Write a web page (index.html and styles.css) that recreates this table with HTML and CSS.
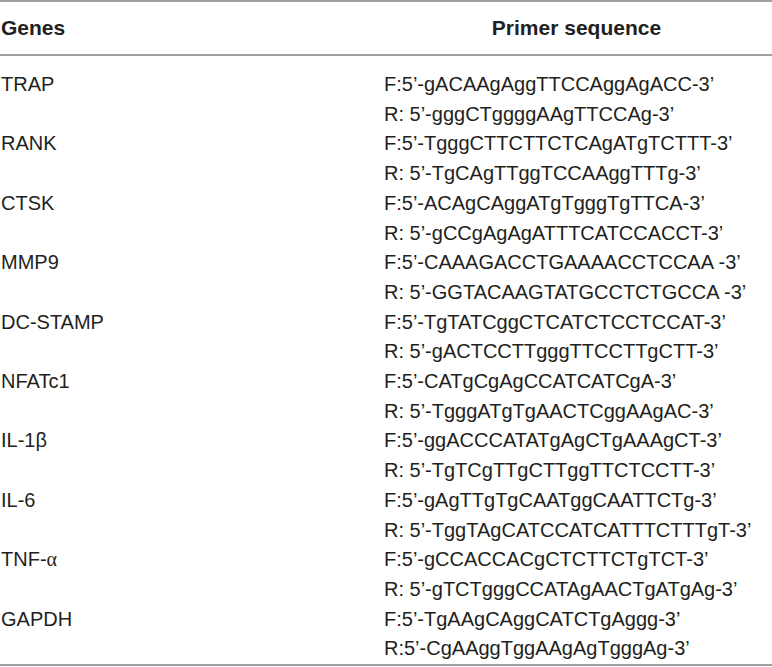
FILE: index.html
```html
<!DOCTYPE html>
<html>
<head>
<meta charset="utf-8">
<link rel="stylesheet" href="styles.css">
</head>
<body>
<table class="primers">
  <thead>
    <tr>
      <th class="col-gene">Genes</th>
      <th class="col-seq">Primer sequence</th>
    </tr>
  </thead>
  <tbody>
    <tr><td class="gene">TRAP</td><td class="seq"><div>F:5’-gACAAgAggTTCCAggAgACC-3’</div><div>R: 5’-gggCTggggAAgTTCCAg-3’</div></td></tr>
    <tr><td class="gene">RANK</td><td class="seq"><div>F:5’-TgggCTTCTTCTCAgATgTCTTT-3’</div><div>R: 5’-TgCAgTTggTCCAAggTTTg-3’</div></td></tr>
    <tr><td class="gene">CTSK</td><td class="seq"><div>F:5’-ACAgCAggATgTgggTgTTCA-3’</div><div>R: 5’-gCCgAgAgATTTCATCCACCT-3’</div></td></tr>
    <tr><td class="gene">MMP9</td><td class="seq"><div>F:5’-CAAAGACCTGAAAACCTCCAA -3’</div><div>R: 5’-GGTACAAGTATGCCTCTGCCA -3’</div></td></tr>
    <tr><td class="gene">DC-STAMP</td><td class="seq"><div>F:5’-TgTATCggCTCATCTCCTCCAT-3’</div><div>R: 5’-gACTCCTTgggTTCCTTgCTT-3’</div></td></tr>
    <tr><td class="gene">NFATc1</td><td class="seq"><div>F:5’-CATgCgAgCCATCATCgA-3’</div><div>R: 5’-TgggATgTgAACTCggAAgAC-3’</div></td></tr>
    <tr><td class="gene">IL-1<span class="greek">β</span></td><td class="seq"><div>F:5’-ggACCCATATgAgCTgAAAgCT-3’</div><div>R: 5’-TgTCgTTgCTTggTTCTCCTT-3’</div></td></tr>
    <tr><td class="gene">IL-6</td><td class="seq"><div>F:5’-gAgTTgTgCAATggCAATTCTg-3’</div><div>R: 5’-TggTAgCATCCATCATTTCTTTgT-3’</div></td></tr>
    <tr><td class="gene">TNF-<span class="greek alpha">α</span></td><td class="seq"><div>F:5’-gCCACCACgCTCTTCTgTCT-3’</div><div>R: 5’-gTCTgggCCATAgAACTgATgAg-3’</div></td></tr>
    <tr><td class="gene">GAPDH</td><td class="seq"><div>F:5’-TgAAgCAggCATCTgAggg-3’</div><div>R:5’-CgAAggTggAAgAgTgggAg-3’</div></td></tr>
  </tbody>
</table>
</body>
</html>
```

FILE: styles.css
```css
html, body {
  margin: 0;
  padding: 0;
  background: #ffffff;
}

body {
  font-family: "Liberation Sans", Arial, sans-serif;
  color: #231f20;
  font-size: 20px;
}

.primers {
  width: 772px;
  border-collapse: collapse;
  border-top: 2px solid #a0a0a0;
  border-bottom: 2px solid #a0a0a0;
}

.primers thead th {
  height: 52px;
  padding: 0;
  font-size: 21px;
  font-weight: bold;
  border-bottom: 2px solid #a0a0a0;
  vertical-align: middle;
}

.col-gene {
  width: 380px;
  text-align: left;
  padding-left: 1px !important;
}

.col-seq {
  text-align: center;
}

.primers tbody tr:first-child td {
  padding-top: 14px;
}

.gene {
  padding: 0 0 0 1px;
  vertical-align: top;
  line-height: 29.7px;
}

.seq {
  padding: 0 0 0 3px;
  vertical-align: top;
  line-height: 29.7px;
  white-space: nowrap;
}

.alpha {
  font-family: "Liberation Serif", serif;
}
```
